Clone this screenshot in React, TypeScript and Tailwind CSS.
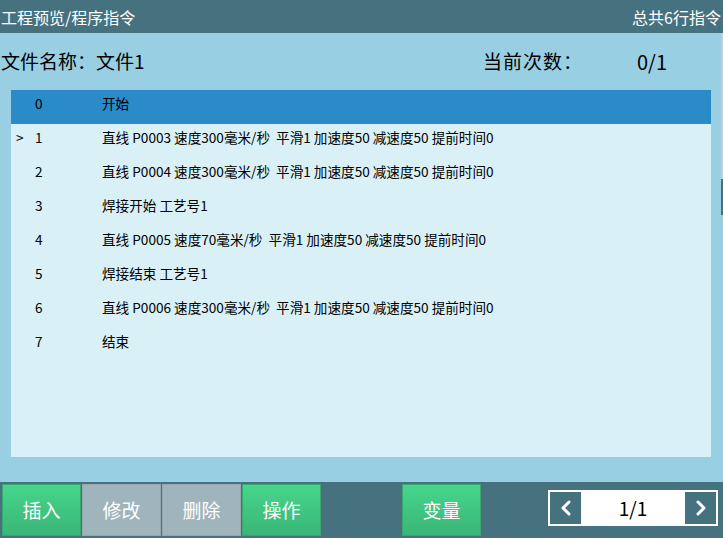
import { ChevronLeft, ChevronRight } from 'lucide-react';

const rows = [
  { no: '0', text: '开始' },
  { no: '1', text: '直线 P0003 速度300毫米/秒  平滑1 加速度50 减速度50 提前时间0', cur: true },
  { no: '2', text: '直线 P0004 速度300毫米/秒  平滑1 加速度50 减速度50 提前时间0' },
  { no: '3', text: '焊接开始 工艺号1' },
  { no: '4', text: '直线 P0005 速度70毫米/秒  平滑1 加速度50 减速度50 提前时间0' },
  { no: '5', text: '焊接结束 工艺号1' },
  { no: '6', text: '直线 P0006 速度300毫米/秒  平滑1 加速度50 减速度50 提前时间0' },
  { no: '7', text: '结束' },
];

const greenBtn =
  'flex items-center justify-center w-[79px] h-[52px] border border-[#3aa56c] bg-gradient-to-b from-[#46d68c] to-[#3ab677] text-white text-[19px]';
const grayBtn =
  'flex items-center justify-center w-[79px] h-[52px] border border-[#93a8b0] bg-[#9fb4bb] text-white text-[19px]';

const App = () => {
  return (
    <div
      className="flex flex-col w-[723px] h-[538px] overflow-hidden bg-[#99cfe2]"
      style={{ fontFamily: '"Segoe UI", "Noto Sans CJK SC", "Noto Sans", sans-serif' }}>
      {/* title bar */}
      <div className="flex items-center justify-between h-[33px] bg-[#467280] text-white text-[16px] pl-[1px] pr-[2px]">
        <span>工程预览/程序指令</span>
        <span>总共6行指令</span>
      </div>

      <div className="flex flex-1">
        <div className="flex flex-col flex-1">
          {/* file info */}
          <div className="flex items-center h-[57px] text-[19px] text-black">
            <span className="w-[483px] pl-[1px]">文件名称：文件1</span>
            <span className="w-[154px] tracking-[1px]">当前次数：</span>
            <span className="text-[20px]">0/1</span>
          </div>

          {/* instruction list */}
          <div className="flex flex-col ml-[11px] mr-[10px] h-[367px] bg-[#d9f0f7] text-[13.6px] text-black">
            {rows.map((r, i) => (
              <div
                key={r.no}
                className={`flex items-center h-[34px] pb-[7px] ${i === 0 ? 'bg-[#2a8bc8]' : ''}`}>
                <span className="w-[24px] pl-[5px]">{r.cur ? '>' : ''}</span>
                <span className="w-[67px]">{r.no}</span>
                <span className="whitespace-pre">{r.text}</span>
              </div>
            ))}
          </div>
        </div>
        {/* scroll strip */}
        <div className="flex flex-col w-[2px]">
          <div className="h-[146px] bg-[#c9cdd0]" />
          <div className="h-[36px] bg-[#467280]" />
        </div>
      </div>

      {/* bottom toolbar */}
      <div className="flex items-start h-[56px] mt-[25px] bg-[#467280] pt-[2px] pl-[2px]">
        <div className="flex gap-[1px]">
          <button type="button" className={greenBtn}>插入</button>
          <button type="button" className={grayBtn}>修改</button>
          <button type="button" className={grayBtn}>删除</button>
          <button type="button" className={greenBtn}>操作</button>
        </div>
        <button type="button" className={`${greenBtn} ml-[81px]`}>变量</button>

        <div className="flex ml-[67px] mt-[6px] w-[170px] h-[36px] border-2 border-white bg-white">
          <div className="flex items-center justify-center w-[31px] bg-[#467280] text-white">
            <ChevronLeft size={24} strokeWidth={3} />
          </div>
          <div className="flex flex-1 items-center justify-center text-[19px] text-black">1/1</div>
          <div className="flex items-center justify-center w-[31px] bg-[#467280] text-white">
            <ChevronRight size={24} strokeWidth={3} />
          </div>
        </div>
      </div>
    </div>
  );
};

export default App;
